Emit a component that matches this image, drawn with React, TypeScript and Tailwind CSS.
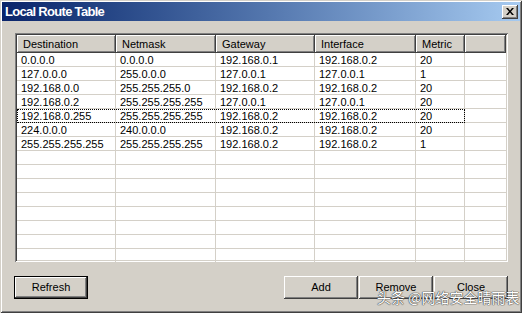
const rows: string[][] = [
  ['0.0.0.0', '0.0.0.0', '192.168.0.1', '192.168.0.2', '20'],
  ['127.0.0.0', '255.0.0.0', '127.0.0.1', '127.0.0.1', '1'],
  ['192.168.0.0', '255.255.255.0', '192.168.0.2', '192.168.0.2', '20'],
  ['192.168.0.2', '255.255.255.255', '127.0.0.1', '127.0.0.1', '20'],
  ['192.168.0.255', '255.255.255.255', '192.168.0.2', '192.168.0.2', '20'],
  ['224.0.0.0', '240.0.0.0', '192.168.0.2', '192.168.0.2', '20'],
  ['255.255.255.255', '255.255.255.255', '192.168.0.2', '192.168.0.2', '1'],
]

const headers = ['Destination', 'Netmask', 'Gateway', 'Interface', 'Metric']
const widths = ['w-[99px]', 'w-[100px]', 'w-[99px]', 'w-[101px]', 'w-[49px]']

const raised =
  'shadow-[inset_-1px_-1px_#404040,inset_1px_1px_#ffffff,inset_-2px_-2px_#808080]'

function Button({ label, isDefault }: { label: string; isDefault?: boolean }) {
  return (
    <button
      className={
        'flex h-[23px] w-[74px] items-center justify-center bg-[#d4d0c8] text-[11px] text-black ' +
        (isDefault
          ? 'border border-black shadow-[inset_-1px_-1px_#404040,inset_1px_1px_#ffffff,inset_-2px_-2px_#808080]'
          : raised)
      }
    >
      {label}
    </button>
  )
}

export default function App() {
  const blank = Array.from({ length: 9 })
  return (
    <div
      className="relative flex h-[313px] w-[522px] flex-col overflow-hidden bg-[#d4d0c8] p-[2px] shadow-[inset_1px_1px_#d4d0c8,inset_-1px_-1px_#404040,inset_2px_2px_#ffffff,inset_-2px_-2px_#808080]"
      style={{ fontFamily: '"Liberation Sans", Arial, sans-serif' }}
    >
      {/* title bar */}
      <div className="flex h-[19px] items-center justify-between bg-gradient-to-r from-[#0a246a] to-[#a6caf0] pl-[3px] pr-[2px]">
        <span className="text-[13px] font-bold tracking-[-0.7px] text-white">Local Route Table</span>
        <div className={'flex h-[14px] w-[16px] items-center justify-center bg-[#d4d0c8] ' + raised}>
          <svg width="8" height="7" viewBox="0 0 8 7">
            <path d="M0 0h2l2 2.5L6 0h2L5 3.5 8 7H6L4 4.5 2 7H0l3-3.5z" fill="#000" />
          </svg>
        </div>
      </div>

      <div className="flex flex-col pl-[12px] pr-[12px] pt-[12px]">
        {/* list view */}
        <div className="ml-[1px] h-[229px] w-[493px] overflow-hidden bg-white p-[2px] shadow-[inset_1px_1px_#808080,inset_-1px_-1px_#ffffff,inset_2px_2px_#404040,inset_-2px_-2px_#d4d0c8]">
          <div className="flex h-[18px] text-[11px] text-black">
            {headers.map((h, i) => (
              <div key={h} className={widths[i] + ' flex items-center bg-[#d4d0c8] pl-[6px] ' + raised}>
                {h}
              </div>
            ))}
            <div className={'flex-1 bg-[#d4d0c8] ' + raised} />
          </div>
          {rows.map((r, ri) => (
            <div key={ri} className="flex h-[14px] text-[11px] leading-[14px] text-black">
              <div
                className={
                  'flex ' + (ri === 4 ? 'outline-1 -outline-offset-1 outline-dotted outline-black' : '')
                }
              >
                {r.map((c, ci) => (
                  <div
                    key={ci}
                    className={widths[ci] + ' border-b border-r border-[#d4d0c8] pl-[4px]'}
                  >
                    {c}
                  </div>
                ))}
              </div>
              <div className="flex-1 border-b border-[#d4d0c8]" />
            </div>
          ))}
          {blank.map((_, bi) => (
            <div key={'b' + bi} className="flex h-[14px]">
              {widths.map((w, wi) => (
                <div key={wi} className={w + ' border-b border-r border-[#d4d0c8]'} />
              ))}
              <div className="flex-1 border-b border-[#d4d0c8]" />
            </div>
          ))}
        </div>

        {/* buttons */}
        <div className="mt-[14px] flex items-center justify-between">
          <Button label="Refresh" isDefault />
          <div className="flex gap-[1px]">
            <Button label="Add" />
            <Button label="Remove" />
            <Button label="Close" />
          </div>
        </div>
      </div>

      <div
        className="absolute left-[377px] top-[289px] text-[14px] leading-[16px] text-white [text-shadow:0_0_1px_#444,0_0_1px_#444,0_0_1px_#444]"
        style={{ fontFamily: '"Noto Sans CJK SC", sans-serif' }}
      >
        头条 @网络安全晴雨表
      </div>
    </div>
  )
}
